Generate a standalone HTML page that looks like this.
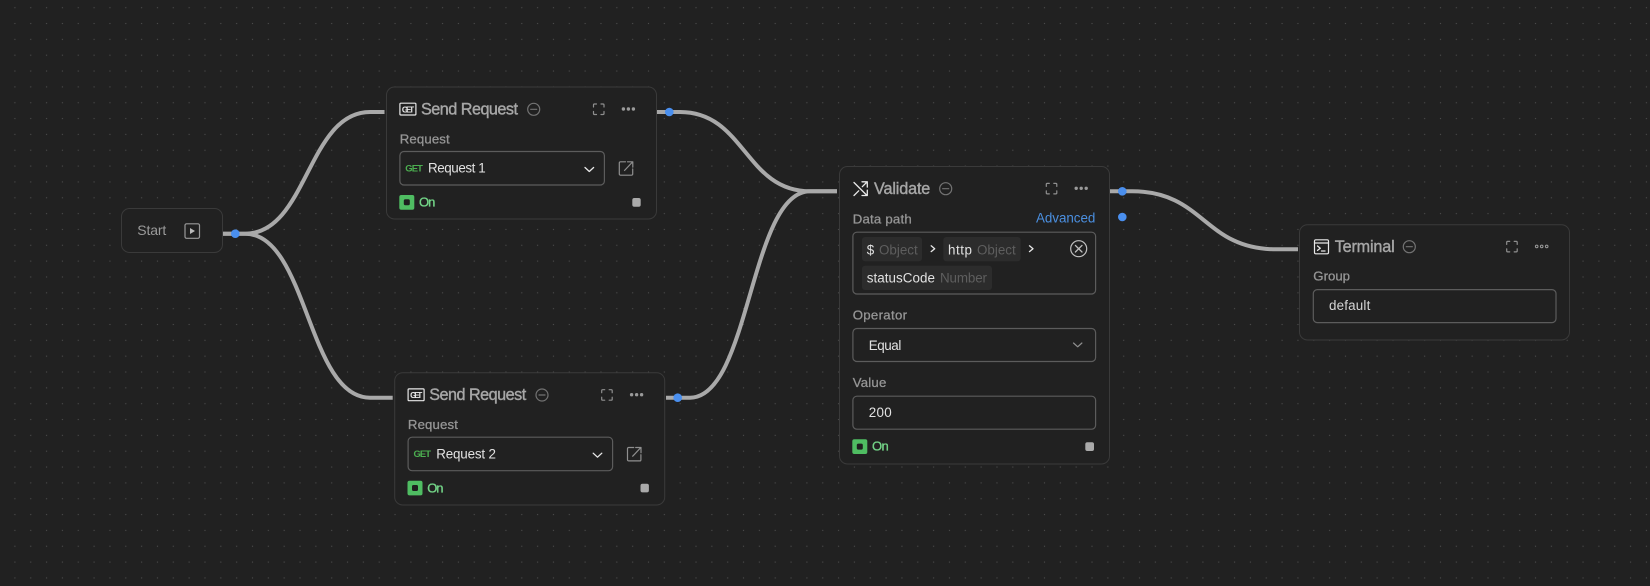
<!DOCTYPE html>
<html><head><meta charset="utf-8"><style>
html,body{margin:0;padding:0;background:#212121;width:1650px;height:586px;overflow:hidden}
svg{display:block}
text{font-family:"Liberation Sans",sans-serif;white-space:pre}
.t{font-size:16.2px;fill:#a6a6a6;stroke:#a6a6a6;stroke-width:.4}
.l{font-size:13.2px;fill:#959595;stroke:#959595;stroke-width:.3}
.v{font-size:13.4px;fill:#e2e2e2}
.m{font-size:13.4px;fill:#5e5e5e}
.on{font-size:13px;fill:#73d487;stroke:#73d487;stroke-width:.35}
.g{font-size:9.4px;font-weight:bold;fill:#4caf50}
.n{fill:#212121;stroke:#3a3a3a;stroke-width:1}
.f{fill:none;stroke:#5c5c5c;stroke-width:1.2}
.ic{fill:none;stroke:#8f8f8f;stroke-width:1.2;stroke-linecap:round;stroke-linejoin:round}
.mi{fill:none;stroke:#737373;stroke-width:1.2;stroke-linecap:round}
.w{fill:none;stroke:#e8e8e8;stroke-width:1.3;stroke-linecap:round;stroke-linejoin:round}
.e{fill:none;stroke:#a9a9a9;stroke-width:4}
.b{fill:#4a8fee}
</style></head><body>
<svg width="1650" height="586" viewBox="0 0 1650 586" xmlns="http://www.w3.org/2000/svg">
<defs><pattern id="d" x="13.9" y="6.7" width="15.84" height="15.84" patternUnits="userSpaceOnUse"><circle cx="1" cy="1" r=".65" fill="#4c4c4c"/></pattern></defs>
<rect width="1650" height="586" fill="#212121"/>
<rect width="1650" height="586" fill="url(#d)"/>

<!-- edges -->
<path class="e" d="M223 233.7H245C307.500 233.700 307.500 112 370 112H384.500"/>
<path class="e" d="M223 233.7H245C307.500 233.700 307.500 397.700 370 397.700H392.700"/>
<path class="e" d="M657 112H680C745 112 745 191.300 810 191.300H837"/>
<path class="e" d="M666 397.700H690C750 397.700 750 191.300 810 191.300H837"/>
<path class="e" d="M1110 191.300H1132C1204 191.300 1204 249.300 1276 249.300H1298"/>

<!-- Start -->
<rect class="n" x="121.500" y="208.500" width="101" height="44" rx="8"/>
<text x="137.300" y="235" font-size="14" fill="#9a9a9a" textLength="29">Start</text>
<rect x="185" y="223.800" width="14.500" height="14.500" rx="1.500" fill="none" stroke="#999" stroke-width="1.200"/>
<path d="M190 228l5 3-5 3z" fill="#bbb"/>

<!-- Send Request 1 -->
<rect class="n" x="386.500" y="87" width="270" height="132" rx="8"/>
<rect x="399.900" y="103.200" width="16" height="11.800" rx="1" fill="none" stroke="#e8e8e8" stroke-width="1.200"/>
<text x="401.900" y="112.300" font-size="8" font-weight="bold" fill="#e8e8e8" textLength="12.200">GET</text>
<text class="t" x="421" y="114.300" textLength="97">Send Request</text>
<circle class="mi" cx="533.700" cy="109.300" r="6"/><path class="mi" d="M530.700 109.300h6"/>
<path class="ic" d="M593.500 107v-2a1 1 0 0 1 1-1h2M601 104h2a1 1 0 0 1 1 1v2M604 111.500v2a1 1 0 0 1-1 1h-2M596.500 114.500h-2a1 1 0 0 1-1-1v-2"/>
<g fill="#9a9a9a"><circle cx="623.400" cy="109" r="1.700"/><circle cx="628.400" cy="109" r="1.700"/><circle cx="633.400" cy="109" r="1.700"/></g>
<text class="l" x="399.700" y="143.300" textLength="50">Request</text>
<rect class="f" x="399.900" y="151.500" width="204.500" height="33.500" rx="4"/>
<text class="g" x="405.300" y="171.300" textLength="17.500">GET</text>
<text class="v" x="428" y="172.700" textLength="57.700">Request 1</text>
<path class="w" d="M585 167.500l4.300 4 4.300-4" stroke-width="1.100"/>
<path class="ic" d="M625.500 161.800h-5a1.200 1.200 0 0 0-1.200 1.200v11a1.200 1.200 0 0 0 1.200 1.200h11a1.200 1.200 0 0 0 1.200-1.200v-5M624.500 170.500l8-8.500M627.500 161.800h5.300v5.300" stroke-width="1.400"/>
<rect x="399.300" y="195" width="15" height="14.700" rx="2" fill="#4fbd62"/>
<rect x="403.800" y="199.300" width="6" height="6" rx="1.500" fill="#1f1f1f"/>
<text class="on" x="419" y="206.700" textLength="16.300">On</text>
<rect x="632.300" y="198" width="8.400" height="8.700" rx="2" fill="#aaa"/>

<!-- Send Request 2 -->
<rect class="n" x="394.700" y="372.700" width="270" height="132.300" rx="8"/>
<rect x="408.100" y="388.900" width="16" height="11.800" rx="1" fill="none" stroke="#e8e8e8" stroke-width="1.200"/>
<text x="410.100" y="398" font-size="8" font-weight="bold" fill="#e8e8e8" textLength="12.200">GET</text>
<text class="t" x="429.200" y="400" textLength="97">Send Request</text>
<circle class="mi" cx="542" cy="395" r="6"/><path class="mi" d="M539 395h6"/>
<path class="ic" d="M601.700 392.700v-2a1 1 0 0 1 1-1h2M609.200 389.700h2a1 1 0 0 1 1 1v2M612.200 397.200v2a1 1 0 0 1-1 1h-2M604.700 400.200h-2a1 1 0 0 1-1-1v-2"/>
<g fill="#9a9a9a"><circle cx="631.600" cy="394.700" r="1.700"/><circle cx="636.600" cy="394.700" r="1.700"/><circle cx="641.600" cy="394.700" r="1.700"/></g>
<text class="l" x="407.900" y="429" textLength="50">Request</text>
<rect class="f" x="408.100" y="437.200" width="204.500" height="33.500" rx="4"/>
<text class="g" x="413.500" y="457" textLength="17.500">GET</text>
<text class="v" x="436.200" y="458.400" textLength="59.800">Request 2</text>
<path class="w" d="M593.200 453.200l4.300 4 4.300-4" stroke-width="1.100"/>
<path class="ic" d="M633.700 447.500h-5a1.200 1.200 0 0 0-1.200 1.200v11a1.200 1.200 0 0 0 1.200 1.200h11a1.200 1.200 0 0 0 1.200-1.200v-5M632.700 456.200l8-8.500M635.700 447.500h5.300v5.300" stroke-width="1.400"/>
<rect x="407.500" y="480.700" width="15" height="14.700" rx="2" fill="#4fbd62"/>
<rect x="412" y="485" width="6" height="6" rx="1.500" fill="#1f1f1f"/>
<text class="on" x="427.200" y="492.400" textLength="16.300">On</text>
<rect x="640.500" y="483.700" width="8.400" height="8.700" rx="2" fill="#aaa"/>

<!-- Validate -->
<rect class="n" x="839.500" y="166.500" width="270" height="297.500" rx="8"/>
<path class="w" d="M854 182.500l13 13M854 195.500l4.700-4.700M862.300 186.700l4.700-4.700M862 181.800h5.300v5.300M862 195.500h5.300v-5.300" stroke-width="1.200"/>
<text class="t" x="874" y="194" textLength="56.300">Validate</text>
<circle class="mi" cx="945.700" cy="188.700" r="6"/><path class="mi" d="M942.700 188.700h6"/>
<path class="ic" d="M1046.300 186.400v-2a1 1 0 0 1 1-1h2M1053.800 183.400h2a1 1 0 0 1 1 1v2M1056.800 190.900v2a1 1 0 0 1-1 1h-2M1049.300 193.900h-2a1 1 0 0 1-1-1v-2"/>
<g fill="#9a9a9a"><circle cx="1076.200" cy="188.300" r="1.700"/><circle cx="1081.200" cy="188.300" r="1.700"/><circle cx="1086.200" cy="188.300" r="1.700"/></g>
<text class="l" x="852.700" y="223.300" textLength="59">Data path</text>
<text x="1036" y="222.700" font-size="13.400" fill="#4b8fe0" textLength="59.300">Advanced</text>
<rect class="f" x="852.900" y="232.200" width="242.700" height="61.800" rx="4"/>
<rect x="862" y="237" width="60" height="24.300" rx="3" fill="#2c2c2c"/>
<rect x="943.300" y="237" width="77.400" height="24.300" rx="3" fill="#2c2c2c"/>
<rect x="862" y="265.700" width="130" height="24.300" rx="3" fill="#2c2c2c"/>
<text class="v" x="866.700" y="254.300">$</text>
<text class="m" x="879" y="254.300" textLength="38.700">Object</text>
<text class="v" x="948" y="254.300" textLength="24">http</text>
<text class="m" x="977" y="254.300" textLength="38.700">Object</text>
<text class="v" x="866.700" y="282.700" textLength="68.300">statusCode</text>
<text class="m" x="940" y="282.700" textLength="47">Number</text>
<path class="w" d="M931.200 245.800l3.500 2.900-3.500 2.900M1029.500 245.800l3.500 2.900-3.500 2.900" stroke-width=".9"/>
<circle cx="1078.700" cy="248.700" r="8" fill="none" stroke="#c0c0c0" stroke-width="1.200"/>
<path d="M1075.400 245.400l6.600 6.600M1082 245.400l-6.600 6.600" fill="none" stroke="#c0c0c0" stroke-width="1.300" stroke-linecap="round"/>
<text class="l" x="852.700" y="319.300" textLength="54.300">Operator</text>
<rect class="f" x="852.900" y="328.500" width="242.700" height="33" rx="4"/>
<text class="v" x="868.700" y="350" textLength="32.600">Equal</text>
<path class="ic" d="M1073.500 343l4.200 3.800 4.200-3.800"/>
<text class="l" x="852.700" y="387" textLength="33.600">Value</text>
<rect class="f" x="852.900" y="396.200" width="242.700" height="33" rx="4"/>
<text class="v" x="868.700" y="417" textLength="23">200</text>
<rect x="852.300" y="439.300" width="15" height="14.700" rx="2" fill="#4fbd62"/>
<rect x="856.800" y="443.600" width="6" height="6" rx="1.500" fill="#1f1f1f"/>
<text class="on" x="872" y="450.700" textLength="16.700">On</text>
<rect x="1085.300" y="442.300" width="8.700" height="8.700" rx="2" fill="#aaa"/>

<!-- Terminal -->
<rect class="n" x="1299.500" y="224.700" width="270" height="115.300" rx="8"/>
<rect x="1314.500" y="239.800" width="14" height="14" rx="1.300" fill="none" stroke="#e8e8e8" stroke-width="1.200"/>
<path class="w" d="M1314.500 243h14M1317.500 246l2.800 2.200-2.800 2.200M1321.500 251h3.500" stroke-width="1.100"/>
<text class="t" x="1334.700" y="252" textLength="60">Terminal</text>
<circle class="mi" cx="1409.300" cy="246.700" r="6"/><path class="mi" d="M1406.300 246.700h6"/>
<path class="ic" d="M1506.700 244.400v-2a1 1 0 0 1 1-1h2M1514.200 241.400h2a1 1 0 0 1 1 1v2M1517.200 248.900v2a1 1 0 0 1-1 1h-2M1509.700 251.900h-2a1 1 0 0 1-1-1v-2"/>
<g fill="none" stroke="#9a9a9a" stroke-width="1"><circle cx="1536.700" cy="246.400" r="1.300"/><circle cx="1541.700" cy="246.400" r="1.300"/><circle cx="1546.700" cy="246.400" r="1.300"/></g>
<text class="l" x="1313.300" y="280.700" textLength="36.700">Group</text>
<rect class="f" x="1313.300" y="289.600" width="242.700" height="33" rx="4"/>
<text x="1329" y="310" font-size="13.400" fill="#d6d6d6" textLength="41.300">default</text>

<!-- handles -->
<circle class="b" cx="235.300" cy="233.700" r="4.300"/>
<circle class="b" cx="669.300" cy="112" r="4.300"/>
<circle class="b" cx="677.700" cy="397.700" r="4.300"/>
<circle class="b" cx="1122.300" cy="191.300" r="4.300"/>
<circle class="b" cx="1122.300" cy="217" r="4.300"/>
</svg>
</body></html>
